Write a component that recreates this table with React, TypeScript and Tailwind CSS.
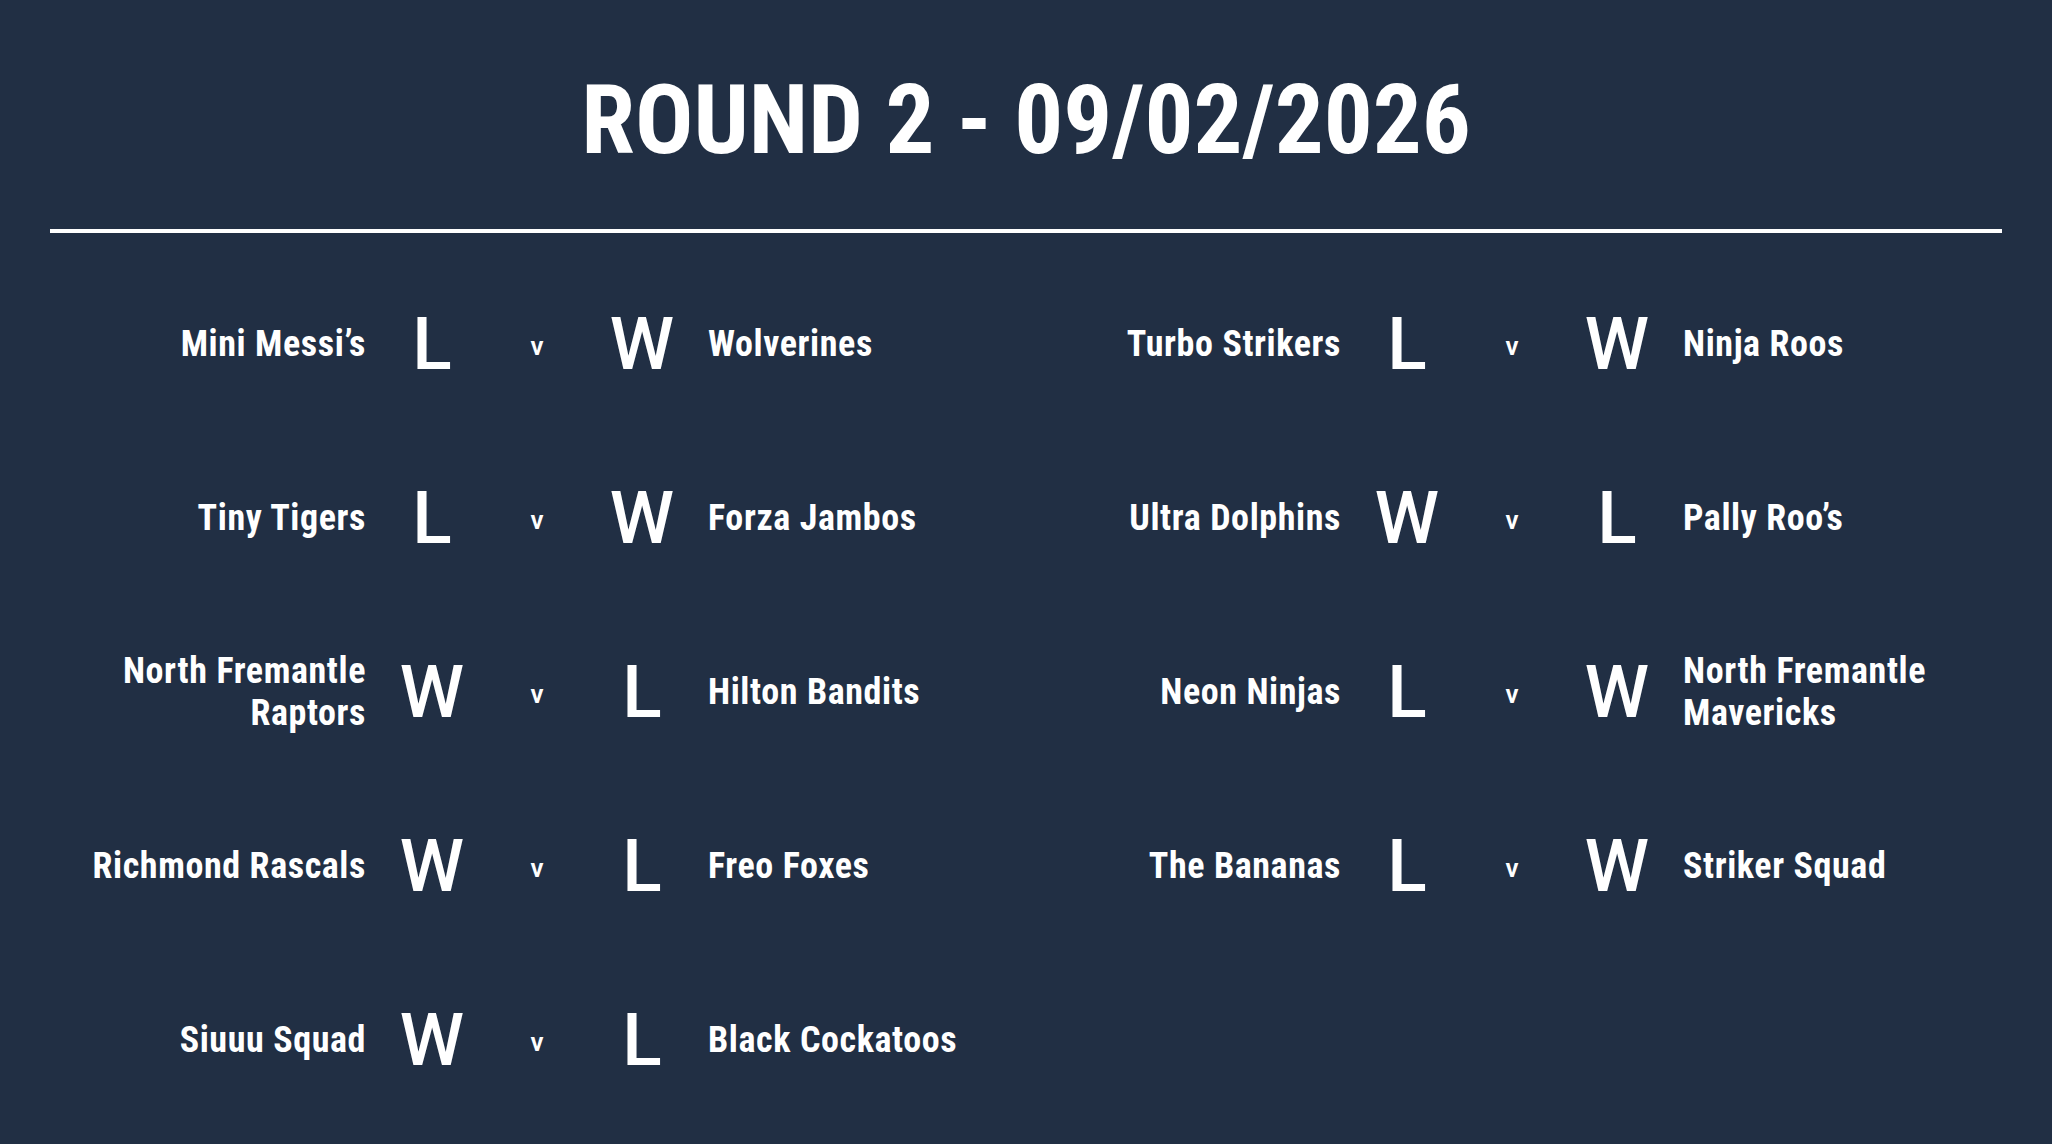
import React from "react";

type Match = { a: React.ReactNode; ra: string; b: React.ReactNode; rb: string };

const left: Match[] = [
  { a: "Mini Messi’s", ra: "L", b: "Wolverines", rb: "W" },
  { a: "Tiny Tigers", ra: "L", b: "Forza Jambos", rb: "W" },
  { a: <>North Fremantle<br />Raptors</>, ra: "W", b: "Hilton Bandits", rb: "L" },
  { a: "Richmond Rascals", ra: "W", b: "Freo Foxes", rb: "L" },
  { a: "Siuuu Squad", ra: "W", b: "Black Cockatoos", rb: "L" },
];

const right: Match[] = [
  { a: "Turbo Strikers", ra: "L", b: "Ninja Roos", rb: "W" },
  { a: "Ultra Dolphins", ra: "W", b: "Pally Roo’s", rb: "L" },
  { a: "Neon Ninjas", ra: "L", b: <>North Fremantle<br />Mavericks</>, rb: "W" },
  { a: "The Bananas", ra: "L", b: "Striker Squad", rb: "W" },
];

function Row({ m }: { m: Match }) {
  return (
    <div className="flex h-[174px] items-center">
      <div className="w-[316px] text-right text-[36px] font-bold leading-[42px] tracking-[0.6px] font-stretch-[80%]">{m.a}</div>
      <div className="ml-[26px] w-[80px] text-center text-[73px] leading-none font-medium font-stretch-[95%]">{m.ra}</div>
      <div className="w-[130px] pt-[3px] text-center text-[26px] font-semibold leading-none">v</div>
      <div className="w-[80px] text-center text-[73px] leading-none font-medium font-stretch-[95%]">{m.rb}</div>
      <div className="ml-[26px] text-left text-[36px] font-bold leading-[42px] tracking-[0.6px] font-stretch-[80%]">{m.b}</div>
    </div>
  );
}

export default function App() {
  return (
    <div className="min-h-[1144px] w-full bg-[#212f44] font-[Roboto,sans-serif] text-white">
      <div className="pt-[71px] text-center text-[97px] font-bold leading-[98px] font-stretch-[80%]">
        ROUND 2 - 09/02/2026
      </div>
      <div className="mx-[50px] mt-[60px] h-[4px] bg-white" />
      <div className="mt-[24px] grid grid-cols-[975px_975px] pl-[50px]">
        <div>
          {left.map((m, i) => (
            <Row key={i} m={m} />
          ))}
        </div>
        <div>
          {right.map((m, i) => (
            <Row key={i} m={m} />
          ))}
        </div>
      </div>
    </div>
  );
}
